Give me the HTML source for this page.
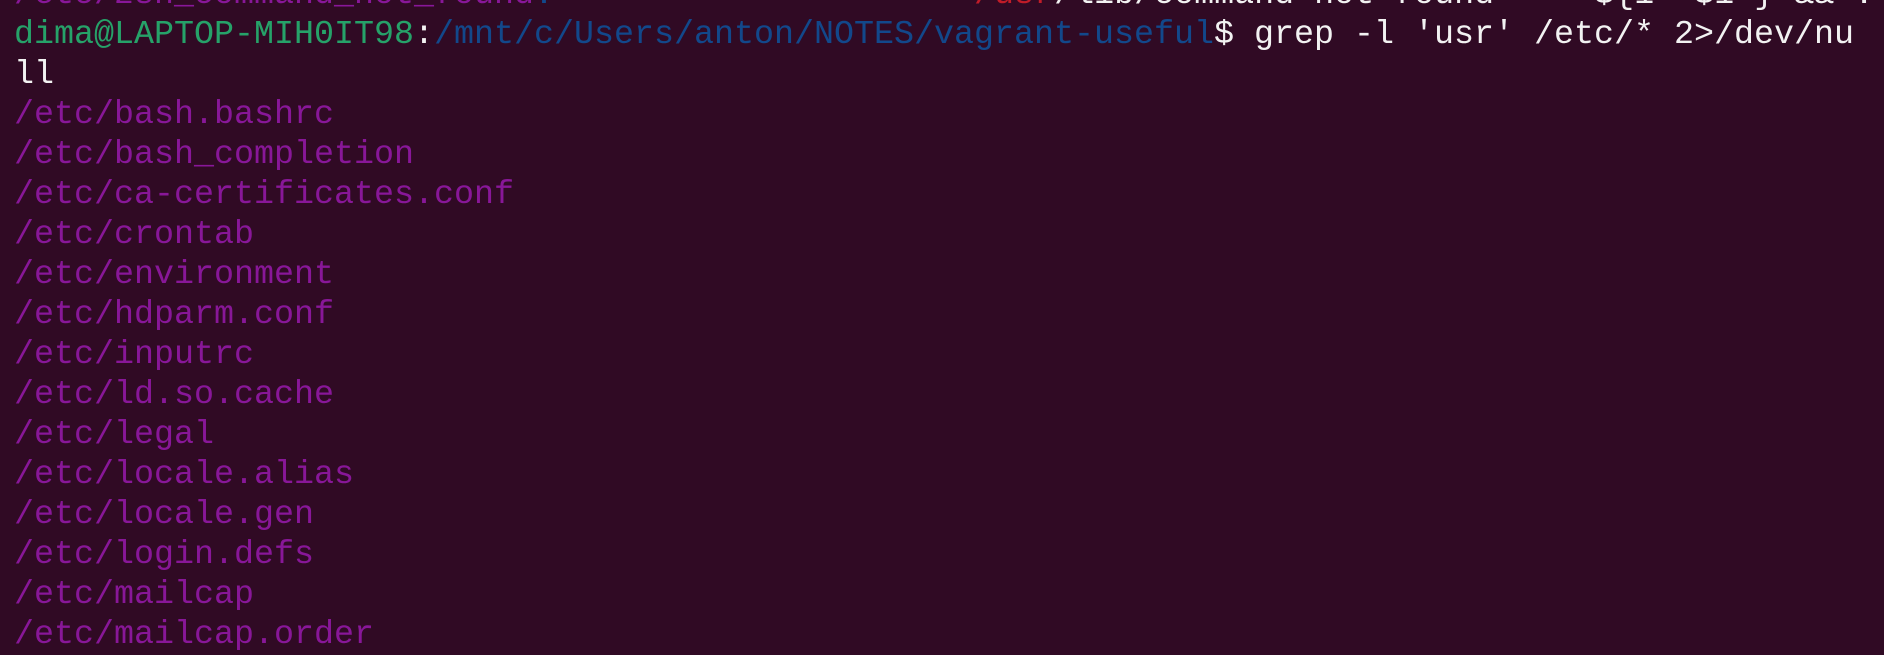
<!DOCTYPE html>
<html><head><style>
html,body{margin:0;padding:0;width:1884px;height:642px;overflow:hidden;background:#300a24;}
pre{margin:0;position:absolute;left:14px;top:-25px;font-family:"Liberation Mono",monospace;font-size:33.35px;line-height:40px;color:#f2f2f2;white-space:pre;}
.p{color:#881798}.g{color:#26a269}.b{color:#12488b}.r{color:#c01c28}
</style></head><body>
<pre><span class="p">/etc/zsh_command_not_found</span><span class="b">:</span>                     <span class="r">/usr</span>/lib/command-not-found" -- ${1+"$1"} &amp;&amp; :
<span class="g">dima@LAPTOP-MIH0IT98</span>:<span class="b">/mnt/c/Users/anton/NOTES/vagrant-useful</span>$ grep -l 'usr' /etc/* 2&gt;/dev/nu
ll
<span class="p">/etc/bash.bashrc
/etc/bash_completion
/etc/ca-certificates.conf
/etc/crontab
/etc/environment
/etc/hdparm.conf
/etc/inputrc
/etc/ld.so.cache
/etc/legal
/etc/locale.alias
/etc/locale.gen
/etc/login.defs
/etc/mailcap
/etc/mailcap.order</span></pre>
</body></html>
